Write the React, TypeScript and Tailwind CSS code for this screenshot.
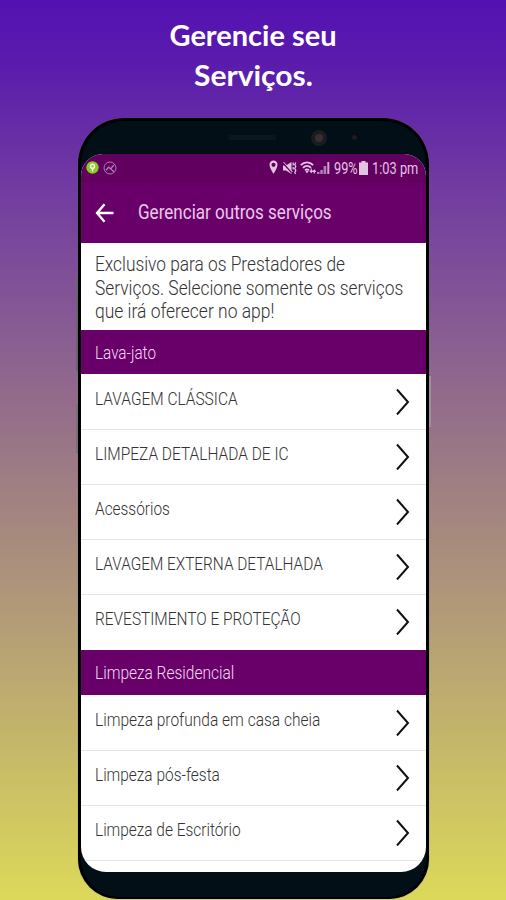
import { useLayoutEffect, useRef, useState } from "react";
import { clsx } from "clsx";

interface FitTextProps {
  text: string;
  width: number;
  className?: string;
}

interface Service {
  label: string;
  width: number;
}

interface ServiceGroup {
  title: string;
  titleWidth: number;
  items: Service[];
}

const introLines: Service[] = [
  { label: "Exclusivo para os Prestadores de", width: 250 },
  { label: "Serviços. Selecione somente os serviços", width: 308 },
  { label: "que irá oferecer no app!", width: 179 },
];

const groups: ServiceGroup[] = [
  {
    title: "Lava-jato",
    titleWidth: 61,
    items: [
      { label: "LAVAGEM CLÁSSICA", width: 143 },
      { label: "LIMPEZA DETALHADA DE IC", width: 194 },
      { label: "Acessórios", width: 75 },
      { label: "LAVAGEM EXTERNA DETALHADA", width: 228 },
      { label: "REVESTIMENTO E PROTEÇÃO", width: 206 },
    ],
  },
  {
    title: "Limpeza Residencial",
    titleWidth: 139,
    items: [
      { label: "Limpeza profunda em casa cheia", width: 225 },
      { label: "Limpeza pós-festa", width: 125 },
      { label: "Limpeza de Escritório", width: 146 },
    ],
  },
];

// Condenses a single line of text to a fixed width
function FitText({ text, width, className }: FitTextProps) {
  const ref = useRef<HTMLSpanElement>(null);
  const [scale, setScale] = useState(1);

  useLayoutEffect(() => {
    if (ref.current) setScale(width / ref.current.offsetWidth);
  }, [width, text]);

  return (
    <span className={clsx("block shrink-0", className)} style={{ width }}>
      <span
        ref={ref}
        className="inline-block origin-left whitespace-nowrap"
        style={{ transform: `scaleX(${scale})` }}
      >
        {text}
      </span>
    </span>
  );
}

function StatusBar() {
  return (
    <div className="flex h-[29px] shrink-0 items-center bg-[#62005f] pr-2 pb-0.5 pl-[5px] text-[#e3c3e2]">
      <svg className="size-[13px]" viewBox="0 0 13 13">
        <circle cx="6.5" cy="6.5" r="6.2" fill="#8bc926" />
        <circle cx="6.5" cy="5.2" r="2" fill="#8bc926" stroke="#f4ffe0" strokeWidth="1.6" />
        <path d="M6.5 7.5v3" stroke="#f4ffe0" strokeWidth="1.5" />
      </svg>
      <svg className="ml-[4px] size-[14px]" viewBox="0 0 14 14" fill="none" stroke="#b27bb2" strokeWidth="1">
        <circle cx="7" cy="7" r="6" />
        <path d="M3 9.2 5.6 6.2l2 1.6L11 4M8 8l3 3" strokeWidth="1.3" />
      </svg>

      <svg className="ml-auto h-[15px] w-[9px]" viewBox="0 0 9 15" fill="currentColor">
        <path
          fillRule="evenodd"
          d="M4.5.5A4 4 0 0 0 .5 4.7C.5 8 4.5 13.8 4.5 13.8S8.5 8 8.5 4.7A4 4 0 0 0 4.5.5Zm0 2.3a2 2 0 1 1 0 4.1 2 2 0 0 1 0-4.1Z"
        />
      </svg>
      <svg className="ml-[5px] h-[14px] w-[14px]" viewBox="0 0 14 14" fill="currentColor">
        <path d="M0 4.5h3L8.5 1v12L3 9.5H0Z" />
        <path d="M0 2 8.5 11.5" stroke="#62005f" strokeWidth="1.2" />
        <path d="M.5 1 9.5 11" stroke="currentColor" strokeWidth="1" />
        <path d="M10.2 1.5v3M10.2 6v2.5M12.8 1.5l-1 2 1 2-1 2 1 2-1 2 .8 1.5" fill="none" stroke="currentColor" strokeWidth="1.3" />
      </svg>
      <svg className="ml-[3px] h-[14px] w-[16px]" viewBox="0 0 16 14" fill="none" stroke="currentColor" strokeWidth="1.8">
        <path d="M.8 4.2C4.3.4 9.7.4 13.2 4.2M3 6.8c2.3-2.5 5.7-2.5 8 0M5 9.3c1.3-1.3 2.7-1.3 4 0" />
        <path d="M5.2 9.8h3.6L7 12.5Z" fill="currentColor" stroke="none" />
        <path d="M11.3 7.5v3.3M9.8 9.6l1.5 1.7 1.5-1.7M14.3 12.500V9.500M12.900 10.800l1.400-1.600 1.400 1.600" strokeWidth="1.1" />
      </svg>
      <svg className="ml-[1px] h-[14px] w-[13px]" viewBox="0 0 13 14" fill="currentColor">
        <path d="M0 13v-2h2.5v2ZM3.300 13V9h2.500v4ZM6.600 13V5h2.600v8Z" opacity=".65" />
        <path d="M10.300 13V1h2v12Z" opacity=".85" />
      </svg>
      <FitText text="99%" width={24} className="ml-[4px] text-[17px] leading-7 font-normal" />
      <svg className="ml-[1px] h-[14px] w-[9px]" viewBox="0 0 9 14" fill="currentColor">
        <path d="M2.500 0h4v1.500H9V14H0V1.500h2.500Z" />
      </svg>
      <FitText text="1:03 pm" width={46} className="ml-[4px] text-[17px] leading-7 font-normal" />
    </div>
  );
}

function AppBar() {
  return (
    <div className="flex h-[60px] shrink-0 items-center bg-[#69006a] pb-px pl-[14px] text-white">
      <svg className="h-5 w-[19px]" viewBox="0 0 19 20" fill="none" stroke="currentColor" strokeWidth="2.4">
        <path d="M18.500 10H3M9.500 1.300 2.100 10l7.400 8.700" />
      </svg>
      <FitText
        text="Gerenciar outros serviços"
        width={194}
        className="ml-[24px] text-[19.5px] leading-6 font-normal text-[#e9c9e9]"
      />
    </div>
  );
}

function ServiceRow({ label, width, first, last }: Service & { first: boolean; last: boolean }) {
  return (
    <div
      className={clsx(
        "flex shrink-0 justify-between pr-4 pl-3.5",
        first ? "h-14 pt-[13px]" : "h-[55px] pt-3",
        !last && "border-b border-[#e4e4e4]",
      )}
    >
      <FitText text={label} width={width} className="text-[18.3px] leading-6 text-[#333]" />
      <svg className="h-7 w-[15px]" viewBox="0 0 15 28" fill="none" stroke="#111" strokeWidth="2">
        <path d="M2 2.500 13 15 2 27.500" />
      </svg>
    </div>
  );
}

export default function App() {
  return (
    <div className="h-[900px] w-[506px] overflow-hidden bg-[linear-gradient(to_bottom,#5411b2_0%,#5a1bac_7%,#733ea0_22%,#9a7786_50%,#b7a274_72%,#dcd95a_100%)] font-['Roboto',sans-serif] font-light">
      <header className="flex h-[118px] flex-col items-center pt-[15px] font-['Lato',sans-serif] text-[29px] leading-10 font-bold text-white">
        <FitText text="Gerencie seu" width={167} />
        <FitText text="Serviços." width={119} />
      </header>

      <div className="relative ml-[78px] flex h-[781px] w-[351px] flex-col rounded-t-[46px] rounded-b-[40px] border-x-[3px] border-t-[3px] border-b-2 border-black bg-[#020f16] shadow-[0_0_1px_#66665a]">
        {/* Side buttons */}
        <div className="absolute top-[155px] -left-[5px] h-[95px] w-[2px] bg-[#66646f]" />
        <div className="absolute top-[283px] -left-[5px] h-[49px] w-[2px] bg-[#77707a]" />
        <div className="absolute top-[255px] -right-[5px] h-[51px] w-[2px] bg-[#9b929a]" />

        {/* Speaker and front camera */}
        <div className="flex h-[33px] shrink-0 items-center">
          <div className="ml-[147px] h-[5px] w-12 rounded-full bg-[#0b171e]" />
          <div className="ml-[35px] flex size-4 items-center justify-center rounded-full bg-[#1c1c20]">
            <div className="size-2 rounded-full bg-[#34302f]" />
          </div>
          <div className="ml-[25px] size-[5px] rounded-full bg-[#1f1a1c]" />
        </div>

        <main className="flex h-[718px] w-[345px] flex-col overflow-hidden rounded-t-[22px] rounded-b-[25px] bg-white">
          <StatusBar />
          <AppBar />
          <div className="h-[87px] shrink-0 pt-[10px] pl-3.5 text-[20px] leading-[23.7px] text-[#333]">
            {introLines.map((line) => (
              <FitText key={line.label} text={line.label} width={line.width} />
            ))}
          </div>
          {groups.map((group, groupIndex) => (
            <section key={group.title} className="shrink-0">
              <h2
                className={clsx(
                  "bg-[#69006a] pt-[11px] pl-3.5 text-[18.3px] leading-6 text-[#f3dcf3]",
                  groupIndex === 0 ? "h-11" : "h-[45px]",
                )}
              >
                <FitText text={group.title} width={group.titleWidth} />
              </h2>
              {group.items.map((item, i) => (
                <ServiceRow
                  key={item.label}
                  {...item}
                  first={i === 0}
                  last={groupIndex === 0 && i === group.items.length - 1}
                />
              ))}
            </section>
          ))}
        </main>
      </div>
    </div>
  );
}
